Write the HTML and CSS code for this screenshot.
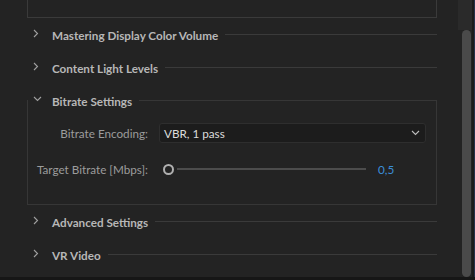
FILE: index.html
```html
<!DOCTYPE html>
<html lang="en">
<head>
    <meta charset="UTF-8">
    <title>Export Settings</title>
    <link rel="stylesheet" href="styles.css">
</head>
<body>
    <div class="window">
        <div class="panel">
            <div class="box-end"></div>

            <div class="section">
                <svg class="chev" width="6" height="9" viewBox="0 0 6 9"><path d="M1 1l3.5 3.5L1 8" fill="none" stroke="#a0a0a0" stroke-width="1.1"/></svg>
                <span class="title">Mastering Display Color Volume</span>
                <span class="rule"></span>
            </div>
            <div class="section">
                <svg class="chev" width="6" height="9" viewBox="0 0 6 9"><path d="M1 1l3.5 3.5L1 8" fill="none" stroke="#a0a0a0" stroke-width="1.1"/></svg>
                <span class="title">Content Light Levels</span>
                <span class="rule"></span>
            </div>

            <fieldset class="group">
                <legend class="legend">
                    <svg class="chev-down" width="9" height="6" viewBox="0 0 9 6"><path d="M1 1l3.5 3.5L8 1" fill="none" stroke="#a0a0a0" stroke-width="1.1"/></svg>
                    <span class="title">Bitrate Settings</span>
                </legend>
                <div class="row">
                    <label class="label">Bitrate Encoding:</label>
                    <div class="select">
                        <span>VBR, 1 pass</span>
                        <svg width="9" height="6" viewBox="0 0 9 6"><path d="M1 1l3.5 3.5L8 1" fill="none" stroke="#bdbdbd" stroke-width="1.1"/></svg>
                    </div>
                </div>
                <div class="row slider-row">
                    <label class="label">Target Bitrate [Mbps]:</label>
                    <div class="slider">
                        <span class="knob"></span>
                        <span class="track"></span>
                    </div>
                    <span class="value">0,5</span>
                </div>
            </fieldset>

            <div class="section">
                <svg class="chev" width="6" height="9" viewBox="0 0 6 9"><path d="M1 1l3.5 3.5L1 8" fill="none" stroke="#a0a0a0" stroke-width="1.1"/></svg>
                <span class="title">Advanced Settings</span>
                <span class="rule"></span>
            </div>
            <div class="section">
                <svg class="chev" width="6" height="9" viewBox="0 0 6 9"><path d="M1 1l3.5 3.5L1 8" fill="none" stroke="#a0a0a0" stroke-width="1.1"/></svg>
                <span class="title">VR Video</span>
                <span class="rule"></span>
            </div>
        </div>
        <div class="scrollbar">
            <div class="thumb"></div>
        </div>
        <div class="edge"></div>
    </div>
</body>
</html>
```

FILE: styles.css
```css
*{
    margin: 0;
    padding: 0;
    box-sizing: border-box;
}
body{
    background-color: #161616;
    font-family: Lato, "Open Sans", sans-serif;
    font-size: 11.7px;
    overflow: hidden;
}
.window{
    display: flex;
    height: 277px;
    background-color: #232323;
}
.panel{
    flex: 1;
    padding-left: 27px;
    padding-right: 21px;
}
.box-end{
    height: 18px;
    border: 1px solid #3a3a3a;
    border-top: none;
}
.section{
    display: flex;
    align-items: center;
    height: 33px;
}
.chev{
    margin-left: 6px;
    margin-right: 13px;
    margin-top: -3px;
}
.title{
    color: #b7b7b7;
    font-weight: 700;
    white-space: nowrap;
}
.rule{
    flex: 1;
    height: 1px;
    margin-left: 7px;
    background-color: #3a3a3a;
}
.group{
    border: 1px solid #363636;
    padding: 6px 0 25px 0;
    margin: 0;
}
.legend{
    display: flex;
    align-items: center;
    height: 33px;
    padding-right: 7px;
    padding-left: 0;
}
.chev-down{
    margin-left: 5px;
    margin-right: 10px;
    margin-top: -3px;
}
.row{
    display: grid;
    grid-template-columns: 120px 1fr;
    column-gap: 11px;
    align-items: center;
    height: 20px;
    padding-right: 10px;
}
.slider-row{
    grid-template-columns: 120px 1fr 58px;
    column-gap: 15px;
    margin-top: 16px;
    padding-right: 0;
}
.label{
    text-align: right;
    color: #9c9c9c;
    white-space: nowrap;
}
.select{
    display: flex;
    align-items: center;
    justify-content: space-between;
    height: 20px;
    padding: 0 5px 0 4px;
    background-color: #1c1c1c;
    border: 1px solid #2e2e2e;
    border-radius: 3px;
    color: #dcdcdc;
}
.slider{
    display: flex;
    align-items: center;
    margin-right: -3px;
}
.knob{
    width: 11px;
    height: 11px;
    border: 2px solid #b0b0b0;
    border-radius: 50%;
}
.track{
    flex: 1;
    height: 2px;
    margin-left: 3px;
    background-color: #4c4c4c;
}
.value{
    color: #3b8ed8;
}
.scrollbar{
    width: 14px;
    padding: 30px 1px 0 4px;
    background: linear-gradient(#2a2a2a 30px, #232323 30px);
}
.thumb{
    height: 100%;
    background-color: #4a4a4a;
    border-radius: 5px;
}
.edge{
    width: 3px;
    background-color: #1b1b1b;
    border-right: 1px solid #24304a;
}
```
